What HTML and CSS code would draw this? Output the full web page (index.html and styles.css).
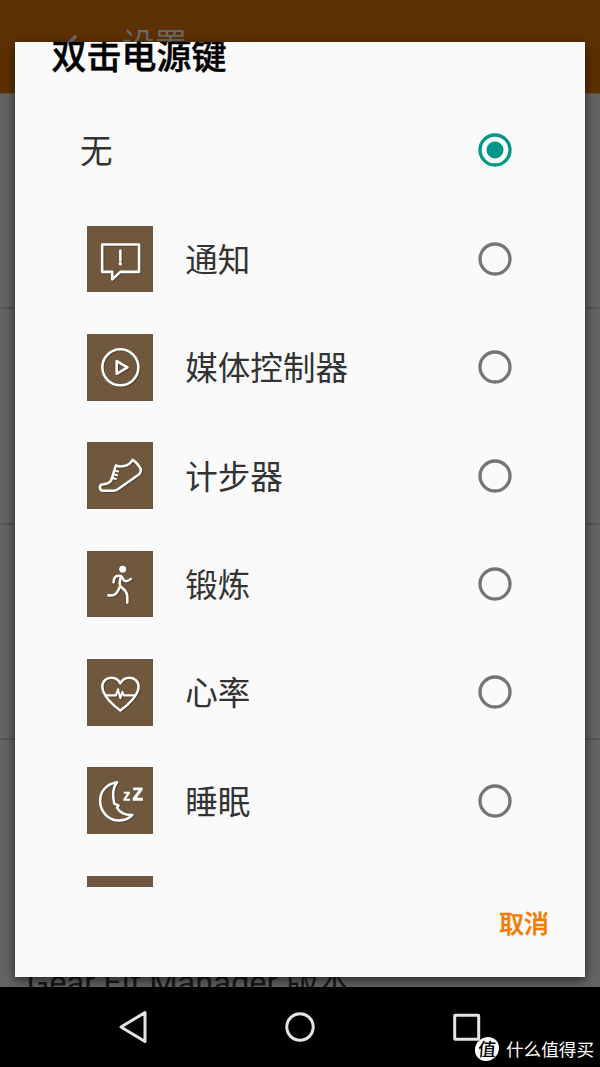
FILE: index.html
```html
<!DOCTYPE html>
<html lang="zh-CN">
<head>
<meta charset="utf-8">
<title>设置</title>
<link rel="stylesheet" href="styles.css">
</head>
<body>
<div class="screen">
  <div class="page">
    <header class="appbar">
      <svg class="back" width="18" height="28" viewBox="0 0 18 28"><path d="M14 2 3 13l11 11"/></svg>
      <span class="appbar-title">设置</span>
    </header>
    <main class="settings">
      <div class="setting"></div>
      <div class="setting"></div>
      <div class="setting"></div>
      <div class="setting last"><span>Gear Elf Manager 版本</span></div>
    </main>
  </div>

  <section class="dialog">
    <h1 class="dialog-title">双击电源键</h1>
    <div class="options">
      <div class="option plain"><span class="label">无</span><svg class="radio checked" viewBox="0 0 34 34"><circle cx="17" cy="17" r="15"/><circle class="dot" cx="17" cy="17" r="8.5"/></svg></div>
      <div class="option">
        <svg class="icon" viewBox="0 0 66 66"><g class="line"><path d="M15 18.4h36.5v27H33l-8 7.5v-7.5H15z"/><path d="M33 24.5v10"/></g><circle class="solid" cx="33" cy="37.4" r="1.7"/></svg>
        <span class="label">通知</span><svg class="radio" viewBox="0 0 34 34"><circle cx="17" cy="17" r="15"/></svg>
      </div>
      <div class="option">
        <svg class="icon" viewBox="0 0 66 66"><g class="line"><circle cx="33" cy="33" r="17.8"/><path d="M29.4 26.8v12.6L40 33z"/></g></svg>
        <span class="label">媒体控制器</span><svg class="radio" viewBox="0 0 34 34"><circle cx="17" cy="17" r="15"/></svg>
      </div>
      <div class="option">
        <svg class="icon" viewBox="0 0 66 66"><g class="line"><path d="M28.7 23.2C32 25 41 25 45.1 17.6C48 19.4 51.5 23.5 53.2 26.8C53.8 30 52.4 31.5 50.3 33L30.5 46.8C28.8 48 27.8 48.3 26 48.3H16C12.5 48.3 11.8 43.5 14.3 42.2C16 41.5 21.5 42.3 23.7 38.3C25.8 34.2 26.8 27 28.7 23.2z"/><path class="thin" d="m27.2 28.4 3.6.8m-4.6 2.8 3.6 1m-4.7 2.4 3.4 1.2"/></g></svg>
        <span class="label">计步器</span><svg class="radio" viewBox="0 0 34 34"><circle cx="17" cy="17" r="15"/></svg>
      </div>
      <div class="option">
        <svg class="icon" viewBox="0 0 66 66"><circle class="solid" cx="35.3" cy="18" r="3.4"/><g class="line"><path d="M26.3 31c.1-4.5 1.5-6.5 5.2-6.5 2.2 0 3.1.6 3.9 2.8 1 2.4 2.8 4.2 8 .4"/><path d="M33.5 25.2c-.4 4-2.3 6.2-.7 9 1.6 3 5 3.5 6.5 7.8 1 3.1.4 6.5.6 9"/><path d="M32 36.5c-1.7 5-4.6 8.5-10.8 7.4"/></g></svg>
        <span class="label">锻炼</span><svg class="radio" viewBox="0 0 34 34"><circle cx="17" cy="17" r="15"/></svg>
      </div>
      <div class="option">
        <svg class="icon" viewBox="0 0 66 66"><g class="line"><path d="M33 51C26 46 15.2 36 15.2 27.5C15.2 22 19.2 18.5 23.8 18.5C28.5 18.5 31.5 21 33 24.2C34.5 21 37.5 18.5 42.2 18.5C46.8 18.5 51 22 51 27.5C51 36 40 46 33 51z"/><path class="thin" d="M18.5 36h10.2l2-6 2.3 8.7 2-6.2 1.5 3.5h11.2"/></g></svg>
        <span class="label">心率</span><svg class="radio" viewBox="0 0 34 34"><circle cx="17" cy="17" r="15"/></svg>
      </div>
      <div class="option">
        <svg class="icon" viewBox="0 0 66 66"><g class="line"><path d="M29.8 15C19.5 16.6 13 24 13 33.5C13 44.5 21.5 53 31.3 53C37.4 53 42 50.8 44.8 47.4C38 48 32.2 44.8 29.7 40.5L31.2 38.2 27 36.3C25 28 25.8 20 29.8 15z"/></g><path class="solid" d="M36.4 24.6h6v1.7l-3.6 5.1h3.8v1.9h-6.6v-1.7l3.6-5.1h-3.2zM45.6 20.3h9.4v2.5l-5.7 7.7h6v2.8H45.2v-2.5l5.8-7.7h-5.4z"/></svg>
        <span class="label">睡眠</span><svg class="radio" viewBox="0 0 34 34"><circle cx="17" cy="17" r="15"/></svg>
      </div>
      <div class="option"><svg class="icon" viewBox="0 0 66 66"></svg></div>
    </div>
    <footer class="actions"><span class="cancel">取消</span></footer>
  </section>

  <nav class="navbar">
    <svg width="600" height="80" viewBox="0 0 600 80"><path d="M145 25.5v29L121 40z"/><circle cx="300" cy="40" r="13.2"/><rect x="454.7" y="28.2" width="24" height="24" rx=".5"/></svg>
  </nav>
  <div class="watermark"><span class="badge">值</span><span>什么值得买</span></div>
</div>
</body>
</html>
```
FILE: styles.css
```css
* { box-sizing: border-box; }
body { margin: 0; font-family: "Noto Sans CJK SC", sans-serif; }
.screen { position: relative; width: 600px; height: 1067px; overflow: hidden; display: flex; flex-direction: column; }
.page { height: 987px; overflow: hidden; background: #646464; }
.appbar { height: 94px; padding: 16px 0 0 62px; display: flex; align-items: flex-start; gap: 42px; background: #5e3103; border-bottom: 1px solid #6a5136; }
.back { margin-top: 18px; fill: none; stroke: #6b6b6b; stroke-width: 3.5; }
.appbar-title { font-size: 32.5px; line-height: 54px; color: #6b6b6b; }
.setting { height: 215.3px; border-bottom: 2px solid #555; }
.setting.last { height: 300px; padding: 216px 0 0 27px; font-family: Roboto, "Noto Sans CJK SC", sans-serif; font-size: 32.6px; line-height: 54px; color: #171717; white-space: nowrap; border: 0; }
.dialog { position: absolute; left: 15px; top: 41.5px; width: 570px; height: 935.5px; overflow: hidden; background: #fafafa; box-shadow: 0 3px 10px rgba(0,0,0,.65); display: flex; flex-direction: column; }
.dialog-title { margin: 0; height: 54.8px; padding-left: 36.5px; font-size: 35px; line-height: 23px; font-weight: 500; -webkit-text-stroke: .5px #000; color: #000; }
.options { height: 790.7px; overflow: hidden; }
.option { height: 108.4px; padding: 0 73px 0 71.5px; display: flex; align-items: center; }
.option.plain { padding-left: 65px; }
.icon { width: 66.7px; height: 66.7px; margin-right: 32px; background: #70583e; flex: none; }
.line { fill: none; stroke: #fff; stroke-width: 2.5; stroke-linejoin: round; stroke-linecap: round; filter: drop-shadow(1px 1px .5px rgba(0,0,0,.25)); }
.thin { stroke-width: 2; }
.solid { fill: #fff; }
.label { flex: 1; padding-bottom: 2px; font-size: 32.6px; line-height: 48px; color: #333; }
.radio { width: 34px; height: 34px; fill: none; stroke: #757575; stroke-width: 3.3; }
.radio.checked { stroke: #009688; }
.dot { fill: #009688; stroke: none; }
.actions { flex: 1; padding: 17px 36px 0 0; text-align: right; }
.cancel { font-size: 25px; line-height: 36px; font-weight: 500; -webkit-text-stroke: .4px #ef7c00; color: #ef7c00; }
.navbar { height: 80px; background: #000; }
.navbar svg { display: block; fill: none; stroke: #e4e4e4; stroke-width: 3; stroke-linejoin: round; }
.watermark { position: absolute; left: 475px; top: 1037px; display: flex; align-items: center; gap: 7px; font-size: 17.6px; line-height: 24px; color: #fff; white-space: nowrap; }
.badge { width: 24px; height: 24px; border-radius: 50%; background: #fff; color: #000; font-size: 18px; font-weight: 500; text-align: center; line-height: 22px; transform: skewX(-5deg); }
```
